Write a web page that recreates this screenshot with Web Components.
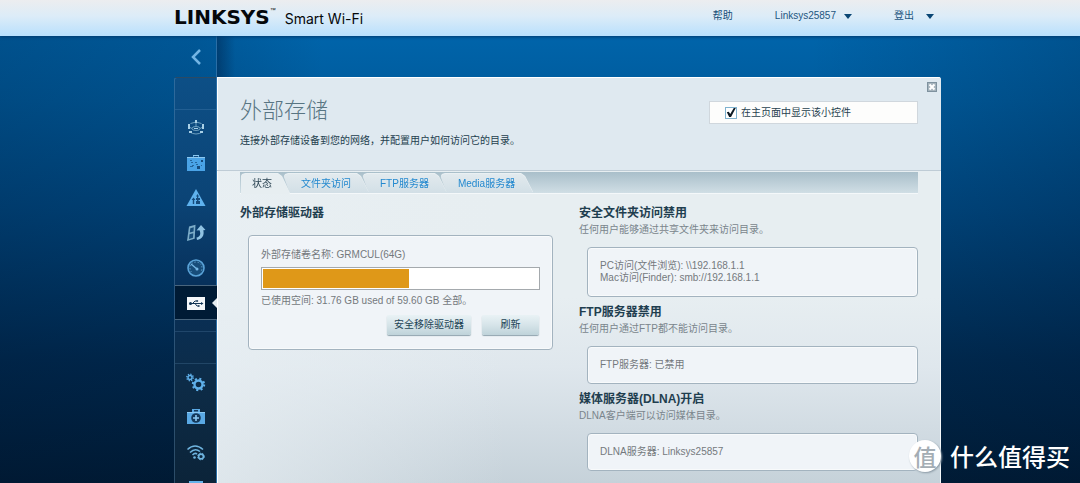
<!DOCTYPE html>
<html lang="zh-CN">
<head>
<meta charset="utf-8">
<title>Linksys Smart Wi-Fi</title>
<style>
html, body { margin: 0; height: 100%; }
body { font-family: "Liberation Sans", "Noto Sans CJK SC", sans-serif; font-size: 10px; line-height: 16px; color: #34505f; }
</style>
</head>
<body>
<router-app></router-app>
<script>
const define = (name, html, setup) => customElements.define(name, class extends HTMLElement {
  constructor() {
    super();
    this.attachShadow({ mode: 'open' }).innerHTML = html;
  }
  connectedCallback() { if (setup) setup(this, this.shadowRoot); }
});

const icons = {
  map: '<g fill="none" stroke="#6d9fc0"><path d="M4.500 5.500Q10 2.500 15.500 5.500M3.500 14Q10 18 16.500 14"/><ellipse cx="10" cy="10.500" rx="4" ry="2"/><path d="M4 9.500l2 1M16 9.500l-2 1M10 5v3.500"/></g><path fill="#a9d0e6" d="M9 2h2v3H9zM2 6h2v5H2zM16 6h2v5h-2zM3 13h3v2H3zM14 13h3v2h-3zM8 10h4v1H8z"/>',
  devices: '<path fill="#4aa3e6" d="M7 4V2h6v2h6v14H1V4z"/><path fill="#8cc8f0" d="M1 4h18v1H1zM7 2h6v1H7z"/><g fill="#164b7c"><path d="M8 3h4v1H8zM15 7h2v2h-2zM11 13h3v3h-3z"/><path opacity=".7" d="M4 7h2v1H4zM5 9h2v1H5zM9 9h2v1H9zM4 13h3v1H4zM6 12h2v1H6zM10 11h2v1h-2zM15 12h1v1h-1z"/></g>',
  priority: '<path fill="#5fb2ee" d="M10 1L19.500 18H.500z"/><path fill="#164b7c" d="M5.500 12l2-2.500 2 2.500H8.200v4H6.800v-4zM11.500 6l1.500 2.500h-.800V10H14v2h-1.500v1H14v3h-4v-3h1v-1h-1v-2h1V8.500h-1z"/>',
  media: '<path fill="#7cacc8" d="M3 3.500l6.500-1.800-.800 14L1 18z"/><path fill="#174d7a" d="M4.300 5.200l3.500-1-.300 4.300-3.700 1zM3.500 11.200l3.800-1-.300 4.500-4 1.200z"/><path fill="#8fc2e2" d="M10.500 7.500L15 2l4.500 5-2.200.200C18.500 12 16.500 16 11 17l-.500-2.500C14.500 14 15 10.500 13.500 7.300z"/>',
  speed: '<circle cx="10" cy="10" r="8" fill="#174d7a" stroke="#5aa3d8" stroke-width="1.600"/><path stroke="#75b7e5" stroke-width="1.400" fill="none" d="M5 6l6 5"/><path stroke="#75b7e5" stroke-dasharray="1 2" fill="none" d="M5.500 14a6 6 0 1 1 9 0"/><circle cx="11" cy="11" r="1.500" fill="#75b7e5"/>',
  usb: '<path fill="#f4f7f9" d="M1 4h18v13H1z"/><path fill="none" stroke="#123555" d="M4 10.500h11M6.500 10.500L9 8h2M9 10.500l2 2.500h1.500"/><circle cx="4.500" cy="10.500" r="1.500" fill="#123555"/><path fill="#123555" d="M15 9l2.500 1.500L15 12zM10.500 7.200h1.600v1.600h-1.600zM12 12.200h1.600v1.600H12z"/>',
  gears: '<circle cx="12.500" cy="12.500" r="4" fill="none" stroke="#5fb0ea" stroke-width="2.400"/><circle cx="12.500" cy="12.500" r="5.700" fill="none" stroke="#5fb0ea" stroke-width="2" stroke-dasharray="2 2.500"/><circle cx="4" cy="5.500" r="2" fill="none" stroke="#5fb0ea" stroke-width="1.400"/><circle cx="4" cy="5.500" r="3.200" fill="none" stroke="#5fb0ea" stroke-width="1.400" stroke-dasharray="1.300 1.200"/>',
  aid: '<path fill="#5aa9e4" d="M6 5V2h8v3h5v12H1V5z"/><path fill="#8ccaf4" d="M1 5h18v1H1z"/><path fill="#15395a" d="M8 3h4v1.500H8z"/><circle cx="10" cy="11" r="4.800" fill="#15395a"/><path fill="#8ccaf4" d="M9.200 8h1.600v2.200H13v1.600h-2.200V14H9.200v-2.200H7v-1.600h2.200z"/>',
  wifi: '<g fill="none" stroke="#6fb4df" stroke-width="1.600"><path d="M1.500 7.500Q9 .500 17 7.500M4 10.500Q9 5.500 14 9.500M6.500 13Q9 10.500 11 12"/><circle cx="15" cy="14.500" r="2.400"/><circle cx="15" cy="14.500" r="3.400" stroke-dasharray="1.400 1.400" stroke-width="1"/></g><circle cx="8.500" cy="15.500" r="1.300" fill="#6fb4df"/>',
  shield: '<path fill="#65b3ea" d="M3 4h14v8q0 5-7 7-7-2-7-7z"/>'
};

define('brand-logo', `<style>
:host { display: flex; align-items: baseline; color: #05080b; white-space: nowrap; }
b { font: bold 20px/26px "DejaVu Sans", sans-serif; }
sup { font: 6px/8px "Liberation Sans", sans-serif; align-self: flex-start; margin-top: 2px; }
span { font: 14px/26px Inter, sans-serif; margin-left: 9px; }
</style><b>LINKSYS</b><sup>™</sup><span>Smart Wi-Fi</span>`);

define('drop-trigger', `<style>
button { display: flex; align-items: center; gap: 8px; border: 0; padding: 0; background: none; font: inherit; color: #1d567f; }
:host([wide]) button { gap: 12px; }
svg { width: 8px; height: 5px; fill: #0a4674; }
</style><button type="button"><slot></slot><svg viewBox="0 0 8 5" aria-hidden="true"><path d="M0 0h8L4 5z"/></svg></button>`);

define('top-bar', `<style>
:host { display: grid; grid-template-columns: 174fr 767fr 139fr; height: 36px; flex: none; position: relative;
  background: linear-gradient(#ecedef, #dcecf8 45%, #b9e0fd); box-shadow: 0 1px 3px #003c70; }
div { grid-column: 2; display: flex; justify-content: space-between; align-items: center; padding: 0 7px 0 0; }
nav { display: flex; align-items: center; gap: 42px; padding-bottom: 4px; }
a { color: #164f78; text-decoration: none; }
</style><div><brand-logo></brand-logo><nav><a href="#help">帮助</a><drop-trigger>Linksys25857</drop-trigger><drop-trigger wide>登出</drop-trigger></nav></div>`);

define('rail-item', `<style>
:host { display: block; }
a { display: flex; align-items: center; justify-content: center; height: 35px; box-sizing: border-box; position: relative; }
svg { width: 20px; height: 20px; }
:host([active]) a { background: #001b35; border: solid #49657d; border-width: 1px 0; }
:host([active]) a::after { content: ""; position: absolute; right: 0; top: 12px; border: 5px solid transparent; border-right-color: #e6edf1; border-left: 0; }
</style><a href="#"><svg viewBox="0 0 20 20" aria-hidden="true"></svg></a>`, (el, root) => {
  root.querySelector('svg').innerHTML = icons[el.getAttribute('icon')];
  root.querySelector('a').setAttribute('aria-label', el.getAttribute('label'));
  root.querySelector('a').href = '#' + el.getAttribute('icon');
});

define('side-rail', `<style>
:host { display: flex; flex-direction: column; }
button { height: 41px; border: 0; padding: 0; background: none; }
button svg { width: 12px; height: 18px; display: block; margin: auto; }
nav { flex: 1; border: 1px solid rgba(120,170,210,.3); border-right: 0; border-radius: 3px 0 0 0;
  background: linear-gradient(#0d4f86, #0b4476 120px, #07305a 210px, #0d2c48 300px, #0b2236); }
.blank { height: 31px; border-bottom: 1px solid rgba(120,170,210,.2); }
.rule { height: 11px; border-bottom: 1px solid rgba(120,170,210,.2); }
</style>
<button type="button" aria-label="返回"><svg viewBox="0 0 12 18"><path d="M10 2L3 9l7 7" fill="none" stroke="#73b5e4" stroke-width="2.500"/></svg></button>
<nav><div class="blank"></div>
<rail-item icon="map" label="网络映射"></rail-item><rail-item icon="devices" label="设备"></rail-item><rail-item icon="priority" label="优先级"></rail-item><rail-item icon="media" label="媒体"></rail-item><rail-item icon="speed" label="速度"></rail-item><rail-item icon="usb" label="外部存储" active></rail-item>
<div class="rule"></div><div class="blank"></div>
<rail-item icon="gears" label="连接"></rail-item><rail-item icon="aid" label="故障排除"></rail-item><rail-item icon="wifi" label="无线"></rail-item><rail-item icon="shield" label="安全"></rail-item></nav>`);

define('panel-header', `<style>
:host { display: flex; justify-content: space-between; align-items: flex-start; box-sizing: border-box; padding: 20px 23px 21px; background: #dfe9f0; border-bottom: 1px solid #bfccd6; box-shadow: inset 1px 1px 0 #fff; position: relative; }
h1 { margin: 0 0 8px; font-size: 22px; line-height: 28px; font-weight: 300; color: #587583; }
p { margin: 0; color: #243f4e; }
.pin { display: flex; align-items: center; gap: 4px; flex: 0 1 209px; box-sizing: border-box; margin-top: 4px; height: 23px; padding-left: 15px; border: 1px solid #d0d7dd; background: #fdfdfc; color: #27414f; }
input { appearance: none; width: 12px; height: 12px; margin: 0; border: 1px solid #7fb2cf; background: #fff; display: grid; place-content: center; }
input:checked::before { content: ""; width: 10px; height: 10px; background: #0d1a24; clip-path: polygon(8% 48%, 28% 42%, 42% 66%, 78% 5%, 98% 5%, 50% 95%, 32% 95%); }
.close { position: absolute; right: 4px; top: 5px; width: 10px; height: 10px; border: 0; padding: 0; background: none; }
svg { display: block; }
</style>
<div><h1>外部存储</h1><p>连接外部存储设备到您的网络，并配置用户如何访问它的目录。</p></div>
<label class="pin"><input type="checkbox" checked>在主页面中显示该小控件</label>
<button class="close" type="button" aria-label="关闭"><svg width="10" height="10" viewBox="0 0 10 10"><path d="M0 0h10v10H0z" fill="#7f929f"/><path d="M1 1h8v8H1z" fill="#a5b3bc"/><path d="M2.500 2.500l5 5M7.500 2.500l-5 5" stroke="#fff" stroke-width="2"/></svg></button>`);

define('tab-item', `<style>
:host { display: block; margin-left: -6px; filter: drop-shadow(0 -1px 0 #eaf0f3); }
:host([active]) { margin-left: 1px; z-index: 1; }
button { display: block; height: 19px; border: 0; padding: 0 18px 0 17px; font: inherit; color: #2389cf; white-space: nowrap; background: linear-gradient(#e2eaee, #d2dfe6);
  clip-path: polygon(0 3px, 1px 1px, 4px 0, calc(100% - 12px) 0, calc(100% - 8px) 3px, 100% 100%, 6px 100%); }
:host([active]) button { height: 20px; padding-left: 11px; color: #2b4453; background: #e7eef1; clip-path: polygon(0 3px, 1px 1px, 4px 0, calc(100% - 12px) 0, calc(100% - 8px) 3px, 100% 100%, 0 100%); }
</style><button type="button" role="tab"><slot></slot></button>`);

define('tab-strip', `<style>
:host { display: flex; align-items: flex-start; height: 19px; margin: 1px 23px 0; padding-top: 2px; background: linear-gradient(#a9bfca, #d0dee5); border-bottom: 1px solid #f4f8fa; }
</style><slot></slot>`);

define('info-card', `<style>
:host { display: block; box-sizing: border-box; margin-left: 8px; padding: 12px; border: 1px solid #a3b3bf; border-radius: 4px; background: #f0f4f8; box-shadow: inset 0 0 0 1px #f8fafb; color: #74797d; line-height: 12px; }
</style><slot></slot>`);

define('storage-meter', `<style>
:host { display: block; box-sizing: border-box; height: 23px; border: 1px solid #a4a9ad; background: #fff; padding: 1px; }
div { height: 100%; width: var(--used); background: #df9818; }
</style><div></div>`, (el) => {
  el.style.setProperty('--used', el.getAttribute('value') + '%');
  el.setAttribute('role', 'progressbar');
  el.setAttribute('aria-valuenow', el.getAttribute('value'));
});

define('soft-button', `<style>
button { display: block; height: 20px; min-width: 57px; padding: 0 7px; border: 0; border-radius: 2px; font: inherit; color: #1d4355; background: linear-gradient(#e9f2f5, #d6e4e9 50%, #bfd3da); box-shadow: 0 1px 1px #8fa3ad; }
</style><button type="button"><slot></slot></button>`);

define('service-block', `<style>
:host { display: block; }
h2 { margin: 0; font-size: 12px; line-height: 18px; font-weight: bold; color: #1f3e4f; }
p { margin: 0 0 9px; color: #7a858c; }
</style><h2><slot name="title"></slot></h2><p><slot name="note"></slot></p><info-card><slot></slot></info-card>`);

define('storage-volume', `<style>
:host { display: block; }
h2 { margin: 0 0 13px; font-size: 12px; line-height: 18px; color: #1f3e4f; }
.name { line-height: 14px; margin-bottom: 5px; }
.used { line-height: 16px; margin: 3px 0 6px; }
.actions { display: flex; justify-content: flex-end; gap: 11px; margin: 0 1px 2px; }
</style><h2>外部存储驱动器</h2>
<info-card><div class="name">外部存储卷名称: GRMCUL(64G)</div><storage-meter value="53"></storage-meter><div class="used">已使用空间: 31.76 GB used of 59.60 GB 全部。</div>
<div class="actions"><soft-button>安全移除驱动器</soft-button><soft-button>刷新</soft-button></div></info-card>`);

define('storage-panel', `<style>
:host { display: block; box-sizing: border-box; margin-top: 41px; border-radius: 0 3px 0 0; overflow: hidden;
  background: linear-gradient(90deg, rgba(232,239,243,.7), transparent 40%), linear-gradient(#e7eef1 220px, #dfe7ed 290px, #c5d1d9 410px); box-shadow: inset 1px 1px 0 #fff, inset -1px 0 0 #f4f8fa; }
main { display: grid; grid-template-columns: 313fr 339fr; gap: 26px; padding: 10px 23px 14px; }
.services { display: grid; gap: 6px; }
</style>
<panel-header></panel-header>
<tab-strip role="tablist"><tab-item active>状态</tab-item><tab-item>文件夹访问</tab-item><tab-item>FTP服务器</tab-item><tab-item>Media服务器</tab-item></tab-strip>
<main><storage-volume></storage-volume>
<div class="services">
<service-block><span slot="title">安全文件夹访问禁用</span><span slot="note">任何用户能够通过共享文件夹来访问目录。</span>PC访问(文件浏览): \\\\192.168.1.1<br>Mac访问(Finder): smb://192.168.1.1</service-block>
<service-block><span slot="title">FTP服务器禁用</span><span slot="note">任何用户通过FTP都不能访问目录。</span>FTP服务器: 已禁用</service-block>
<service-block><span slot="title">媒体服务器(DLNA)开启</span><span slot="note">DLNA客户端可以访问媒体目录。</span>DLNA服务器: Linksys25857</service-block>
</div></main>`);

define('site-mark', `<style>
:host { position: absolute; right: 10px; bottom: 9px; display: flex; align-items: center; gap: 9px; color: #fff; font: 500 24px/36px "Noto Sans CJK SC", sans-serif; }
b { display: grid; place-items: center; width: 32px; height: 32px; border-radius: 50%; background: #fff; color: #a4adb4; font-size: 23px; font-weight: 500; line-height: 32px; box-shadow: 1px 1px 2px #8b9aa5; }
</style><b>值</b><span>什么值得买</span>`);

define('router-app', `<style>
:host { display: flex; flex-direction: column; height: 100vh; position: relative; overflow: hidden;
  background: linear-gradient(90deg, rgba(0,15,40,.22), rgba(0,15,40,.15) 18%, transparent 30%, transparent 75%, rgba(0,15,40,.2)), linear-gradient(#0064aa 36px, #005b9c 100px, #00477f 210px, #002a50 360px, #001c36); }
.work { flex: 1; min-height: 0; overflow-y: auto; scrollbar-width: none; display: grid; grid-template-columns: 174fr 43fr 724fr 139fr; }
side-rail { grid-column: 2; }
.stage { grid-column: 3; background: linear-gradient(90deg, rgba(0,25,60,.4), transparent 18px) no-repeat; border-left: 1px solid #2a6ea6; margin-left: -1px; }
</style><top-bar></top-bar><div class="work"><side-rail></side-rail><div class="stage"><storage-panel></storage-panel></div></div><site-mark></site-mark>`);
</script>
</body>
</html>
